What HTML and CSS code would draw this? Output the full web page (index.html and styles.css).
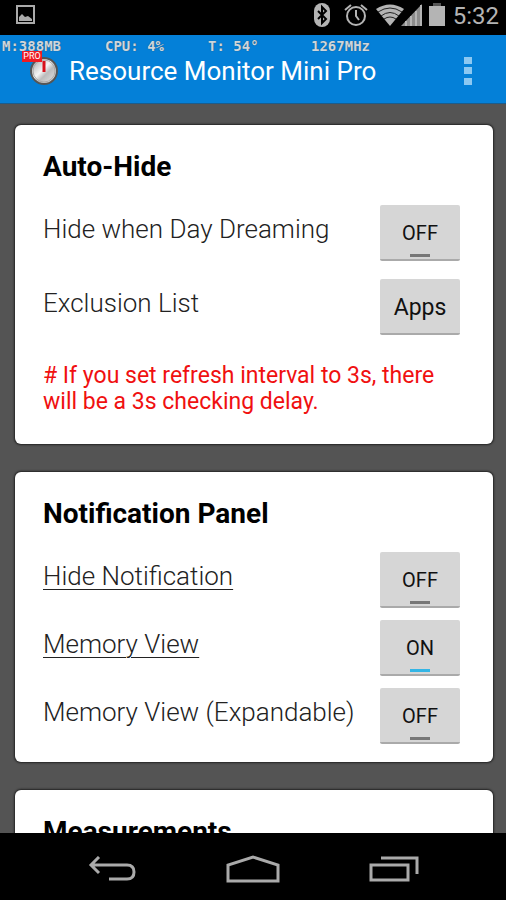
FILE: index.html
```
<!DOCTYPE html>
<html lang="en">
<head>
	<meta charset="utf-8">
	<meta name="viewport" content="width=device-width, initial-scale=1">
	<title>Resource Monitor Mini Pro</title>
	<link rel="stylesheet" href="styles.css">
</head>
<body>
	<div class="status-bar">
		<svg class="shot" width="20" height="20" viewBox="0 0 20 20">
			<rect x="1" y="1" width="17" height="17" fill="none" stroke="#aaa" stroke-width="2"/>
			<path d="M3 16V12L6 9L9 12L12 11L16 14V16Z" fill="#aaa"/>
		</svg>
		<svg width="16" height="24" viewBox="0 0 16 24">
			<rect width="16" height="24" rx="8" fill="#b4b4b4"/>
			<path d="M4 8L12 16L8 20V4L12 8L4 16" fill="none" stroke="#000" stroke-width="2"/>
		</svg>
		<svg class="alarm" width="24" height="24" viewBox="0 0 24 24" fill="none" stroke="#b4b4b4" stroke-width="2">
			<circle cx="12" cy="13" r="9"/>
			<path d="M12 7V13L15 17M1 7L7 2M23 7L17 2"/>
		</svg>
		<svg class="signal" width="46" height="24" viewBox="0 0 46 24">
			<path d="M0 6Q14-3 28 6L14 23Z" fill="#b4b4b4"/>
			<path d="M2 9Q14 1 26 9M5 13Q14 6 23 13M8 16Q14 12 20 16" fill="none" stroke="#222" stroke-width="1"/>
			<path d="M25 23L46 1V23Z" fill="#8c8c8c"/>
			<path d="M30 23V18M35 23V13M40 23V8M45 23V2" stroke="#b4b4b4" stroke-width="2"/>
		</svg>
		<svg class="battery" width="16" height="23" viewBox="0 0 16 23">
			<path d="M4 0H12V3H4Z" fill="#555"/>
			<path d="M0 3H16V23H0Z" fill="#b4b4b4"/>
		</svg>
		<span class="clock">5:32</span>
	</div>
	<header class="action-bar">
		<div class="stats">
			<span>M:388MB</span>
			<span>CPU: 4%</span>
			<span>T: 54°</span>
			<span>1267MHz</span>
		</div>
		<div class="logo">
			<svg width="30" height="30" viewBox="0 0 30 30">
				<defs>
					<linearGradient id="dial" x1="0" y1="0" x2="1" y2="1">
						<stop offset="0" stop-color="#999"/>
						<stop offset=".45" stop-color="#f5f5f5"/>
						<stop offset=".6" stop-color="#bbb"/>
						<stop offset="1" stop-color="#eee"/>
					</linearGradient>
				</defs>
				<circle cx="15" cy="15" r="13" fill="url(#dial)" stroke="#555" stroke-width="2"/>
				<circle cx="15" cy="15" r="11" fill="none" stroke="#aaa" stroke-width="1"/>
				<path d="M15 5V16" stroke="#d8121c" stroke-width="3"/>
			</svg>
			<span class="pro">PRO</span>
		</div>
		<h1>Resource Monitor Mini Pro</h1>
		<button class="more" aria-label="More options">
			<svg width="8" height="28" viewBox="0 0 8 28" fill="#8cc8f2">
				<rect width="8" height="7"/>
				<rect y="10" width="8" height="7"/>
				<rect y="21" width="8" height="7"/>
			</svg>
		</button>
	</header>
	<main class="content">
		<section class="card">
			<h2>Auto-Hide</h2>
			<div class="rows rows-wide">
				<div class="row">
					<span class="label" id="dream">Hide when Day Dreaming</span>
					<button class="btn toggle" aria-labelledby="dream" aria-pressed="false">OFF</button>
				</div>
				<div class="row">
					<span class="label" id="exclusion">Exclusion List</span>
					<button class="btn" aria-describedby="exclusion">Apps</button>
				</div>
			</div>
			<p class="note"># If you set refresh interval to 3s, there will be a 3s checking delay.</p>
		</section>
		<section class="card">
			<h2>Notification Panel</h2>
			<div class="rows">
				<div class="row">
					<a class="label" id="hide" href="#hide">Hide Notification</a>
					<button class="btn toggle" aria-labelledby="hide" aria-pressed="false">OFF</button>
				</div>
				<div class="row">
					<a class="label" id="memory" href="#memory">Memory View</a>
					<button class="btn toggle" aria-labelledby="memory" aria-pressed="true">ON</button>
				</div>
				<div class="row">
					<span class="label" id="expand">Memory View (Expandable)</span>
					<button class="btn toggle" aria-labelledby="expand" aria-pressed="false">OFF</button>
				</div>
			</div>
		</section>
		<section class="card">
			<h2>Measurements</h2>
		</section>
	</main>
	<nav class="nav-bar">
		<button aria-label="Back">
			<svg width="48" height="26" viewBox="0 0 48 26" fill="none" stroke="#aaa" stroke-width="3">
				<path d="M11 1L3 9L11 17M3 9H39Q46 9 46 16T39 23H21"/>
			</svg>
		</button>
		<button aria-label="Home">
			<svg width="54" height="28" viewBox="0 0 54 28" fill="none" stroke="#aaa" stroke-width="3">
				<path d="M2 26V10L27 2L52 10V26Z"/>
			</svg>
		</button>
		<button aria-label="Recent apps">
			<svg width="50" height="26" viewBox="0 0 50 26" fill="none" stroke="#aaa" stroke-width="3">
				<path d="M2 9H39V24H2ZM12 2H48V18"/>
			</svg>
		</button>
	</nav>
<script>
for (let $btn of document.querySelectorAll('.toggle')) {
	$btn.addEventListener('click', function(){
		let on = this.getAttribute('aria-pressed') != 'true'
		this.setAttribute('aria-pressed', on)
		this.innerText = on ? 'ON' : 'OFF'
	})
}
</script>
</body>
</html>
```
FILE: styles.css
```
* {
	box-sizing: border-box;
}
body {
	margin: 0;
	height: 100vh;
	display: flex;
	flex-direction: column;
	overflow: hidden;
	background-color: #000;
	font-family: Roboto, sans-serif;
}
h1, h2, p {
	margin: 0;
}
button {
	border: none;
	padding: 0;
	background: none;
	font-family: inherit;
	cursor: pointer;
}
svg {
	display: block;
}

.status-bar {
	flex: none;
	height: 35px;
	padding: 0 7px 6px 16px;
	display: flex;
	align-items: center;
}
.shot {
	margin-right: auto;
}
.alarm {
	margin-left: 14px;
}
.signal {
	margin-left: 8px;
}
.battery {
	margin-left: 7px;
}
.clock {
	margin-left: 8px;
	padding-top: 2px;
	font-size: 24px;
	line-height: 28px;
	color: #b4b4b4;
}

.action-bar {
	position: relative;
	flex: none;
	height: 69px;
	padding: 4px 24px 0 29px;
	display: flex;
	align-items: center;
	background-color: #0480d8;
	border-bottom: 1px solid #1b5c8c;
	color: #fff;
}
.action-bar h1 {
	margin-left: 10px;
	font-size: 26px;
	line-height: 32px;
	font-weight: 400;
}
/* system readout drawn over the title bar */
.stats {
	position: absolute;
	top: 3px;
	left: 2px;
	display: grid;
	grid-template-columns: repeat(4, 103px);
	font-family: "DejaVu Sans Mono", monospace;
	font-size: 14px;
	line-height: 16px;
	font-weight: 700;
	color: #ccd6de;
	text-shadow: 0 0 1px #345;
}
.logo {
	position: relative;
}
.pro {
	position: absolute;
	top: -5px;
	left: -7px;
	width: 20px;
	background-color: #ee1c24;
	font-size: 9px;
	line-height: 11px;
	text-align: center;
}
.more {
	margin-left: auto;
	padding: 0 10px;
}

.content {
	flex: 1;
	min-height: 0;
	overflow: hidden;
	padding: 21px 13px 0 15px;
	display: flex;
	flex-direction: column;
	gap: 28px;
	background-color: #545454;
}
.card {
	flex: none;
	padding: 24px 33px 18px 28px;
	border-radius: 6px;
	background-color: #fff;
	box-shadow: 0 0 2px 1px #222;
}
.card h2 {
	margin-bottom: 20px;
	font-size: 28px;
	line-height: 36px;
	font-weight: 700;
	color: #000;
}
.rows {
	display: grid;
	gap: 12px;
}
.rows-wide {
	gap: 18px;
}
.row {
	display: flex;
	align-items: center;
	justify-content: space-between;
}
.label {
	padding-bottom: 8px;
	font-size: 26px;
	line-height: 32px;
	font-weight: 300;
	color: #222;
	text-underline-offset: 4px;
	text-decoration-thickness: 1px;
}
.btn {
	position: relative;
	width: 80px;
	height: 56px;
	padding-top: 2px;
	border-bottom: 2px solid #aaa;
	border-radius: 2px;
	background-color: #d6d6d6;
	font-size: 23px;
	color: #111;
}
.toggle {
	font-size: 20px;
}
.toggle::after {
	content: "";
	position: absolute;
	left: 30px;
	bottom: 2px;
	width: 20px;
	height: 3px;
	background-color: #777;
}
.toggle[aria-pressed="true"]::after {
	background-color: #33b5e5;
}
.note {
	padding: 28px 0 11px;
	font-size: 23px;
	line-height: 26px;
	color: #f01010;
}

.nav-bar {
	flex: none;
	height: 67px;
	padding: 4px 42px 0;
	display: grid;
	grid-template-columns: repeat(3, 1fr);
}
.nav-bar button {
	display: flex;
	align-items: center;
	justify-content: center;
}
```
